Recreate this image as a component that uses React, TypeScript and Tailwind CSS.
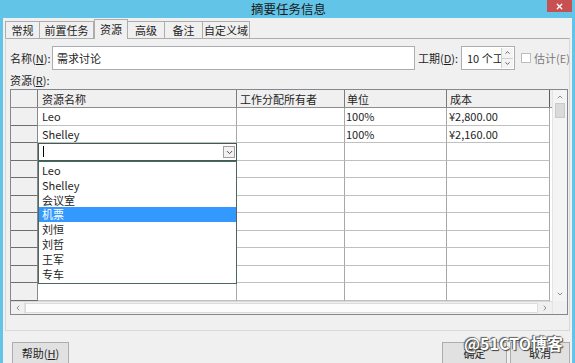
import { X, ChevronDown, ChevronUp, ChevronLeft, ChevronRight } from "lucide-react";

const rows = [
  ["Leo", "", "100%", "¥2,800.00"],
  ["Shelley", "", "100%", "¥2,160.00"],
  ["", "", "", ""],
  ["", "", "", ""],
  ["", "", "", ""],
  ["", "", "", ""],
  ["", "", "", ""],
  ["", "", "", ""],
  ["", "", "", ""],
  ["", "", "", ""],
  ["", "", "", ""],
];

const items = ["Leo", "Shelley", "会议室", "机票", "刘恒", "刘哲", "王军", "专车"];

const tabs = [
  { label: "常规", w: "w-[35px]" },
  { label: "前置任务", w: "w-[54px]" },
  { label: "资源", w: "w-[34px]", active: true },
  { label: "高级", w: "w-[37px]" },
  { label: "备注", w: "w-[38px]" },
  { label: "自定义域", w: "w-[47px]" },
];

export default function App() {
  return (
    <div className="w-[575px] h-[363px] overflow-hidden bg-[#62c4e7] flex flex-col font-['Noto_Sans_CJK_SC',sans-serif] text-[11px] text-[#1e1e1e] whitespace-nowrap relative">
      {/* title bar */}
      <div className="h-[18px] shrink-0 relative flex items-center justify-center">
        <span className="text-[12.5px] text-[#1a1a1a] ml-[2px] leading-none">摘要任务信息</span>
        <div className="absolute right-[3px] top-0 w-[25px] h-[12px] bg-[#c75050] flex items-center justify-center">
          <X size={9} strokeWidth={3.5} color="#ffffff" />
        </div>
      </div>

      <div className="flex-1 mx-[3px] bg-[#f0f0f0] flex flex-col">
        {/* tabs */}
        <div className="h-[20px] flex items-end pl-[2px] relative z-10">
          {tabs.map((t) =>
            t.active ? (
              <div key={t.label} className={`${t.w} h-[20px] -mb-px bg-[#f0f0f0] border border-b-0 border-[#adadad] flex items-center justify-center`}>
                {t.label}
              </div>
            ) : (
              <div key={t.label} className={`${t.w} h-[17px] bg-[#f0f0f0] border-t border-r border-[#adadad] first:border-l flex items-center justify-center`}>
                {t.label}
              </div>
            )
          )}
        </div>

        {/* panel */}
        <div className="ml-[2px] mr-[2px] border border-[#d9d9d9] border-t-[#adadad] pl-[4px] pr-[1px] pt-[7px] pb-[15px]">
          {/* name row */}
          <div className="h-[24px] flex items-center">
            <span className="w-[42px] shrink-0">
              名称(<span className="underline">N</span>):
            </span>
            <div className="w-[363px] shrink-0 h-[24px] bg-white border border-[#abadb3] flex items-center pl-[4px]">需求讨论</div>
            <span className="ml-[3px] w-[43px] shrink-0">
              工期(<span className="underline">D</span>):
            </span>
            <div className="w-[54px] shrink-0 h-[24px] bg-white border border-[#abadb3] flex items-center pl-[5px] relative overflow-hidden">
              <span>10 个工</span>
              <div className="absolute right-[1px] top-[1px] bottom-[1px] w-[12px] flex flex-col border-l border-[#d0d0d0]">
                <div className="flex-1 flex items-center justify-center bg-[#f4f4f4] border-b border-[#d0d0d0]">
                  <ChevronUp size={7} strokeWidth={3} color="#505050" />
                </div>
                <div className="flex-1 flex items-center justify-center bg-[#f4f4f4]">
                  <ChevronDown size={7} strokeWidth={3} color="#505050" />
                </div>
              </div>
            </div>
            <div className="ml-[6px] shrink-0 w-[10px] h-[10px] bg-white border border-[#bcbcbc]" />
            <span className="ml-[3px] text-[#7a7a7a]">估计(E)</span>
          </div>

          <div className="mt-[4px] h-[12px] flex items-center">
            资源(<span className="underline">R</span>):
          </div>

          {/* grid */}
          <div className="mt-[3px] w-[558px] h-[226px] border border-[#828790] bg-white flex relative">
            <div className="w-[541px] flex flex-col">
              {/* header */}
              <div className="h-[18px] flex bg-[#f0f0f0] border-b border-[#8c8c8c]">
                <div className="w-[27px] border-r border-[#7c7c7c]" />
                <div className="w-[199px] border-r border-[#7c7c7c] px-[4px] flex items-center pt-[1px]">资源名称</div>
                <div className="w-[108px] border-r border-[#7c7c7c] px-[3px] flex items-center pt-[1px]">工作分配所有者</div>
                <div className="w-[102px] border-r border-[#7c7c7c] px-[2px] flex items-center pt-[1px]">单位</div>
                <div className="w-[103px] border-r border-[#5c5c5c] px-[3px] flex items-center pt-[1px]">成本</div>
              </div>
              {rows.map((r, i) => (
                <div key={i} className="h-[17.6px] flex">
                  <div className="w-[27px] bg-[#f0f0f0] border-r border-b border-r-[#8a8a8a] border-b-[#6e6e6e]" />
                  {i === 2 ? (
                    <div className="w-[199px] border border-[#40604f] bg-white flex items-center pl-[4px] relative">
                      <span className="w-px h-[11px] bg-black" />
                      <div className="absolute right-[1px] top-[2px] w-[12px] h-[12px] border border-[#a0a0a0] bg-[#f2f2f2] flex items-center justify-center">
                        <ChevronDown size={9} strokeWidth={2.5} color="#404040" />
                      </div>
                    </div>
                  ) : (
                    <div className="w-[199px] border-r border-b border-r-[#a8a8a8] border-b-[#c0c0c0] flex items-center px-[4px]">{r[0]}</div>
                  )}
                  <div className="w-[108px] border-r border-b border-r-[#a8a8a8] border-b-[#c0c0c0] flex items-center px-[3px]">{r[1]}</div>
                  <div className="w-[102px] border-r border-b border-r-[#a8a8a8] border-b-[#c0c0c0] flex items-center px-[1px]">{r[2]}</div>
                  <div className="w-[103px] border-r border-b border-r-[#a8a8a8] border-b-[#c0c0c0] flex items-center px-[2px]">{r[3]}</div>
                </div>
              ))}
              <div className="flex-1" />
              {/* horizontal scrollbar */}
              <div className="h-[13px] flex bg-[#f0f0f0] border-t border-[#d8d8d8]">
                <div className="w-[14px] flex items-center justify-center border-r border-[#e0e0e0]">
                  <ChevronLeft size={8} strokeWidth={2.5} color="#7a7a7a" />
                </div>
                <div className="flex-1 bg-[#fcfcfc] border border-[#dcdcdc] my-[1px]" />
                <div className="w-[14px] flex items-center justify-center">
                  <ChevronRight size={8} strokeWidth={2.5} color="#7a7a7a" />
                </div>
              </div>
            </div>
            {/* vertical scrollbar */}
            <div className="flex-1 flex flex-col bg-[#f4f4f4] border-l border-[#e4e4e4]">
              <div className="h-[13px] flex items-center justify-center">
                <ChevronUp size={8} strokeWidth={2.5} color="#7a7a7a" />
              </div>
              <div className="mx-[2px] h-[15px] bg-[#dadada] border border-[#cacaca]" />
              <div className="flex-1" />
              <div className="h-[14px] flex items-center justify-center">
                <ChevronDown size={8} strokeWidth={2.5} color="#7a7a7a" />
              </div>
              <div className="h-[13px] bg-[#f0f0f0]" />
            </div>

            {/* dropdown list */}
            <div className="absolute left-[27px] top-[70.8px] w-[199px] h-[123px] bg-white border border-[#4d6660] pt-px">
              {items.map((it) => (
                <div
                  key={it}
                  className={`h-[14.8px] flex items-center px-[3px] ${it === "机票" ? "bg-[#3399ff] text-white" : ""}`}
                >
                  {it}
                </div>
              ))}
            </div>
          </div>
        </div>

        {/* buttons */}
        <div className="mt-[11px] flex pl-[9px] pr-[2px]">
          <div className="w-[57px] h-[23px] bg-[#e1e1e1] border border-[#adadad] flex items-center justify-center">
            帮助(<span className="underline">H</span>)
          </div>
          <div className="flex-1" />
          <div className="w-[65px] h-[23px] bg-[#e1e1e1] border border-[#adadad] flex items-center justify-center">确定</div>
          <div className="ml-[3px] w-[60px] h-[23px] bg-[#e1e1e1] border border-[#adadad] flex items-center justify-center">取消</div>
        </div>
      </div>

      {/* watermark */}
      <div className="absolute left-[464px] top-[335px] text-[16px] font-bold text-white leading-none [text-shadow:0_0_1px_#333,1px_1px_1px_#444,-1px_-1px_1px_#666]">
        @51CTO博客
      </div>
    </div>
  );
}
